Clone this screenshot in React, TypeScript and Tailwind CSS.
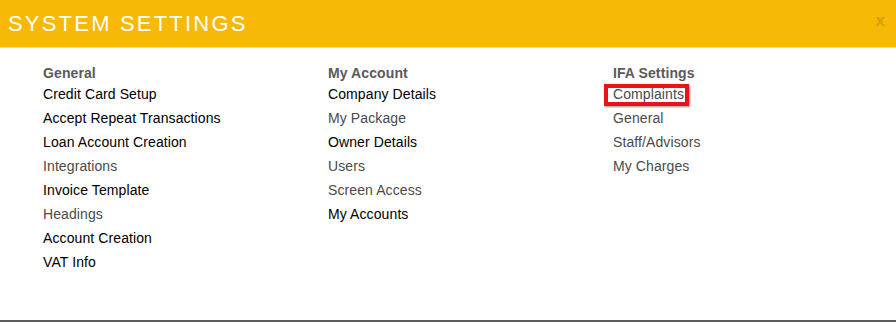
const COLUMNS: { title: string; items: { label: string; dim?: boolean; highlight?: boolean }[] }[] = [
  {
    title: "General",
    items: [
      { label: "Credit Card Setup" },
      { label: "Accept Repeat Transactions" },
      { label: "Loan Account Creation" },
      { label: "Integrations", dim: true },
      { label: "Invoice Template" },
      { label: "Headings", dim: true },
      { label: "Account Creation" },
      { label: "VAT Info" },
    ],
  },
  {
    title: "My Account",
    items: [
      { label: "Company Details" },
      { label: "My Package", dim: true },
      { label: "Owner Details" },
      { label: "Users", dim: true },
      { label: "Screen Access", dim: true },
      { label: "My Accounts" },
    ],
  },
  {
    title: "IFA Settings",
    items: [
      { label: "Complaints", dim: true, highlight: true },
      { label: "General", dim: true },
      { label: "Staff/Advisors", dim: true },
      { label: "My Charges", dim: true },
    ],
  },
];

function SettingsColumn({ col }: { col: (typeof COLUMNS)[number] }) {
  return (
    <div className="w-[285px] shrink-0">
      <p className="text-[14px] font-bold leading-[18px] tracking-[0.1px] text-[#5a5a5a]">{col.title}</p>
      <ul>
        {col.items.map((item) => (
          <li
            key={item.label}
            className={`relative text-[14px] leading-[24px] tracking-[0.1px] ${item.dim ? "text-[#4a4a4a]" : "text-black"}`}
          >
            {item.highlight && (
              <span className="absolute left-[-9px] top-[2px] h-[22px] w-[85px] border-[4px] border-[#e8141b] shadow-[1px_1px_2px_rgba(0,0,0,0.45)]" />
            )}
            <span className="relative">{item.label}</span>
          </li>
        ))}
      </ul>
    </div>
  );
}

export default function App() {
  return (
    <div
      className="flex h-[322px] w-[896px] flex-col bg-white"
      style={{ fontFamily: '"Liberation Sans", Arial, sans-serif' }}
    >
      <div className="flex h-[48px] items-center justify-between border-b border-[#e2e2e2] bg-[#f8b806] pl-[8px] pr-[11px]">
        <h1 className="text-[22px] font-normal tracking-[2.2px] text-white">SYSTEM SETTINGS</h1>
        <span className="mb-[5px] text-[17px] font-bold text-[#d49f00]">x</span>
      </div>
      <div className="flex flex-1 pl-[43px] pt-[16px]">
        {COLUMNS.map((col) => (
          <SettingsColumn key={col.title} col={col} />
        ))}
      </div>
      <div className="h-[2px] bg-[#5c5c5c]" />
    </div>
  );
}
